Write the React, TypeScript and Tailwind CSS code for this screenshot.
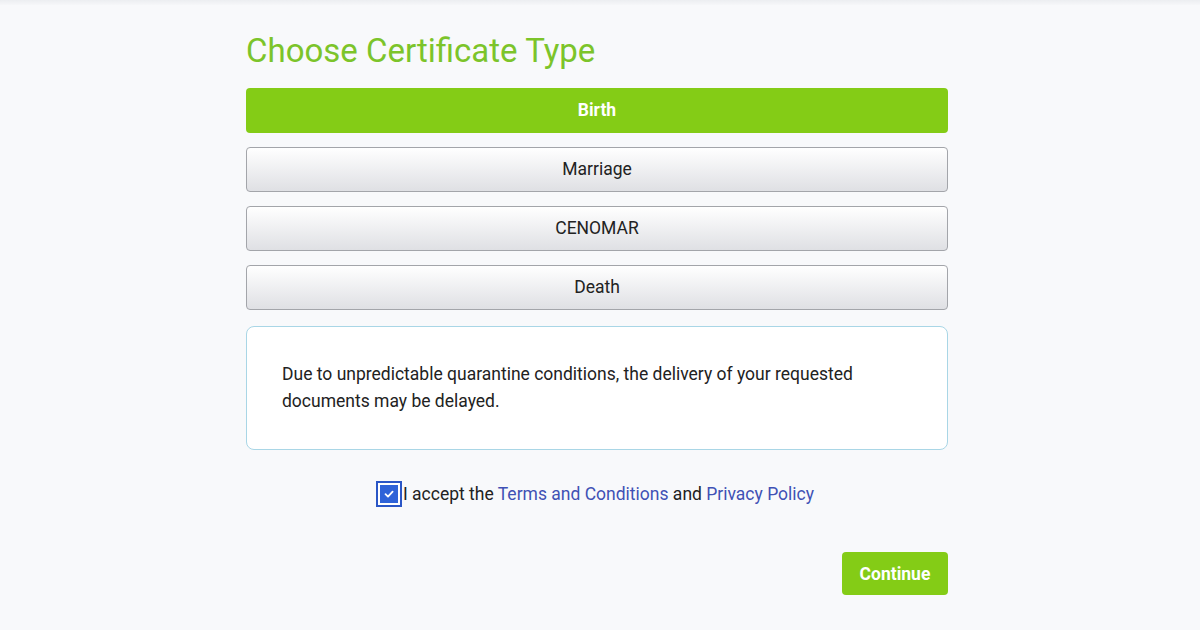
import React, { useState } from "react";

const types = ["Birth", "Marriage", "CENOMAR", "Death"];

export default function App() {
  const [selected, setSelected] = useState("Birth");
  const [accepted, setAccepted] = useState(true);

  return (
    <div className="min-h-screen bg-[#f8f9fb] font-['Roboto',sans-serif] text-[#222]">
      <div className="h-[5px] bg-gradient-to-b from-[#eceef1] to-[#f6f7f9]" />
      <div className="ml-[246px] w-[702px] pt-[26px]">
        <h1 className="text-[33px] leading-[40px] text-[#7cc42a]">Choose Certificate Type</h1>

        <div className="mt-[17px] flex flex-col gap-[14px]">
          {types.map((t) =>
            t === selected ? (
              <button
                key={t}
                onClick={() => setSelected(t)}
                className="h-[45px] rounded-[4px] bg-[#84cc16] text-[17.5px] font-bold text-white"
              >
                {t}
              </button>
            ) : (
              <button
                key={t}
                onClick={() => setSelected(t)}
                className="h-[45px] rounded-[4px] border border-[#a3a5aa] bg-gradient-to-b from-[#ffffff] to-[#dfe0e4] text-[17.5px] text-[#222]"
              >
                {t}
              </button>
            )
          )}
        </div>

        <div className="mt-[16px] flex h-[124px] items-center rounded-[8px] border border-[#a9d6e6] bg-white px-[35px]">
          <p className="text-[17.5px] leading-[27px] text-[#222]">
            Due to unpredictable quarantine conditions, the delivery of your requested
            <br />
            documents may be delayed.
          </p>
        </div>

        <div className="mt-[31px] flex items-center justify-center pr-[4px] text-[17.5px]">
          <button
            onClick={() => setAccepted(!accepted)}
            className="flex h-[26px] w-[26px] items-center justify-center border-2 border-[#2a56c6] bg-white p-[2px]"
          >
            <span className="flex h-full w-full items-center justify-center bg-[#2f63d8]">
              {accepted && (
                <svg width="12" height="12" viewBox="0 0 12 12" fill="none">
                  <path d="M2.5 6.2 L5 8.6 L9.6 3.6" stroke="white" strokeWidth="1.8" strokeLinecap="round" strokeLinejoin="round" />
                </svg>
              )}
            </span>
          </button>
          <span className="ml-[1px]">
            I accept the <a className="text-[#3f51b5]">Terms and Conditions</a> and{" "}
            <a className="text-[#3f51b5]">Privacy Policy</a>
          </span>
        </div>

        <div className="mt-[45px] flex justify-end">
          <button className="h-[43px] w-[106px] rounded-[4px] bg-[#84cc16] text-[17.5px] font-bold text-white">
            Continue
          </button>
        </div>
      </div>
    </div>
  );
}
